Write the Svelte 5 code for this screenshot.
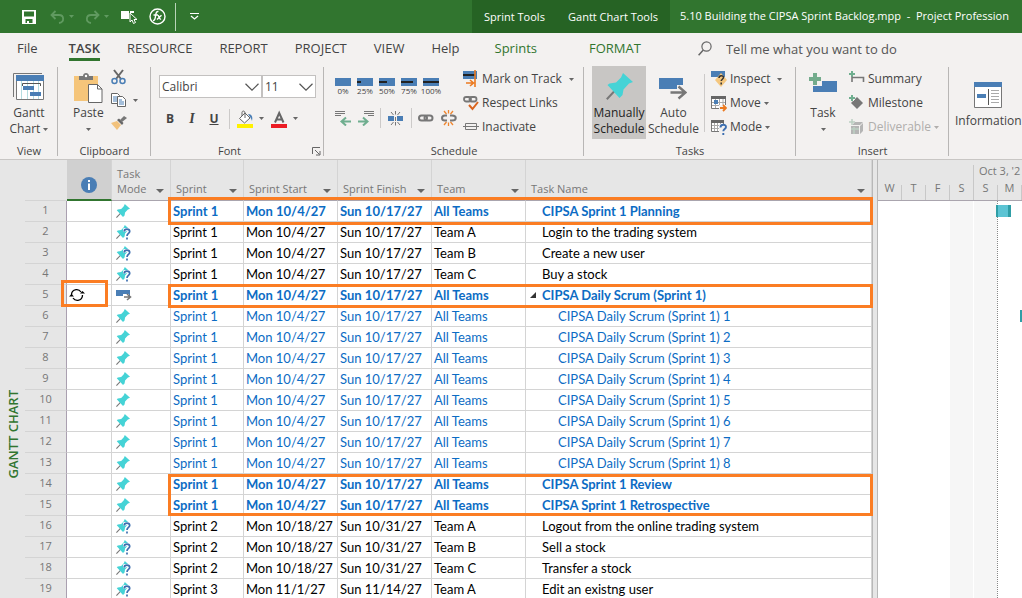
<script lang="ts">
  interface Task {
    id: number;
    mode: 'pin' | 'ask' | 'auto';
    sprint: string;
    start: string;
    finish: string;
    team: string;
    name: string;
    kind: 'bold' | 'sub' | 'plain';
  }

  const first = ['Sprint 1', 'Mon 10/4/27', 'Sun 10/17/27'];
  const second = ['Sprint 2', 'Mon 10/18/27', 'Sun 10/31/27'];
  const third = ['Sprint 3', 'Mon 11/1/27', 'Sun 11/14/27'];

  function task(id: number, mode: Task['mode'], when: string[], team: string, name: string, kind: Task['kind']): Task {
    return { id, mode, sprint: when[0], start: when[1], finish: when[2], team, name, kind };
  }

  const tasks: Task[] = [
    task(1, 'pin', first, 'All Teams', 'CIPSA Sprint 1 Planning', 'bold'),
    task(2, 'ask', first, 'Team A', 'Login to the trading system', 'plain'),
    task(3, 'ask', first, 'Team B', 'Create a new user', 'plain'),
    task(4, 'ask', first, 'Team C', 'Buy a stock', 'plain'),
    task(5, 'auto', first, 'All Teams', 'CIPSA Daily Scrum (Sprint 1)', 'bold'),
    ...[1, 2, 3, 4, 5, 6, 7, 8].map((n) =>
      task(n + 5, 'pin', first, 'All Teams', `CIPSA Daily Scrum (Sprint 1) ${n}`, 'sub')
    ),
    task(14, 'pin', first, 'All Teams', 'CIPSA Sprint 1 Review', 'bold'),
    task(15, 'pin', first, 'All Teams', 'CIPSA Sprint 1 Retrospective', 'bold'),
    task(16, 'ask', second, 'Team A', 'Logout from the online trading system', 'plain'),
    task(17, 'ask', second, 'Team B', 'Sell a stock', 'plain'),
    task(18, 'ask', second, 'Team C', 'Transfer a stock', 'plain'),
    task(19, 'ask', third, 'Team A', 'Edit an existng user', 'plain'),
  ];

  const headerHeight = 41;
  const rowHeight = 21;

  // callouts drawn over the grid; above/below is how far they reach past the rows
  const marks = [
    { area: 'fields', row: 1, rows: 1, above: 4, below: 3 },
    { area: 'fields', row: 5, rows: 1, above: 1, below: 2 },
    { area: 'info', row: 5, rows: 1, above: 5, below: 1 },
    { area: 'fields', row: 14, rows: 2, above: 0, below: 0 },
  ];

  const columns = ['Sprint', 'Sprint Start', 'Sprint Finish', 'Team', 'Task Name'];
  const tabs = ['RESOURCE', 'REPORT', 'PROJECT', 'VIEW', 'Help'];
  const percents = [0, 25, 50, 75, 100];
  const days = ['W', 'T', 'F', 'S', 'S', 'M'];
  const bars = [
    { row: 1, left: 118, width: 15 },
    { row: 6, left: 142, width: 15 },
  ];

  let font = $state('Calibri');
  let size = $state('11');
</script>

{#snippet caret()}
  <svg class="caret" width="5" height="3" viewBox="0 0 5 3"><path d="M0 0h5L2.5 3z" /></svg>
{/snippet}

{#snippet pin(px: number)}
  <svg width={px} height={px} viewBox="0 0 27 27">
    <path d="M9 17.5L.8 26.2" stroke="#777" stroke-width="2" />
    <path d="M17 0L27 9l-4 1.5-5.5 6-1 5.5-3 3L1.500 12l2-1.500L10 9.500l5-5z" fill="#45d3d6" />
  </svg>
{/snippet}

{#snippet chevron()}
  <svg class="chevron" width="14" height="8" viewBox="0 0 14 8"><path d="M.5.8L7 7.200 13.500.8" fill="none" stroke="#555" stroke-width="1.200" /></svg>
{/snippet}

<div class="window">
  <header class="titlebar">
    <div class="quick">
      <button class="save" aria-label="Save">
        <svg width="14" height="14" viewBox="0 0 14 14"><path d="M0 0h14v14H0z" fill="#fff" /><path d="M2 1.500h10v5H2zM3.500 9h7v4h-7z" fill="#31752f" /><path d="M5 11h2v3H5z" fill="#fff" /></svg>
      </button>
      <button class="undo dim" aria-label="Undo">
        <svg width="15" height="14" viewBox="0 0 15 14"><path d="M5.500 1L1.500 5l4 4M2 5h7c5 0 6 7 0 8" fill="none" stroke="#609a60" stroke-width="1.800" /></svg>
        {@render caret()}
      </button>
      <button class="redo dim" aria-label="Redo">
        <svg width="15" height="14" viewBox="0 0 15 14"><path d="M9.500 1l4 4-4 4M13 5H6C1 5 0 12 6 13" fill="none" stroke="#609a60" stroke-width="1.800" /></svg>
        {@render caret()}
      </button>
      <button class="touch" aria-label="Touch mode">
        <svg width="17" height="14" viewBox="0 0 17 14"><path d="M0 1h8v8H0zM9 1h4v2H9z" fill="#fff" /><path d="M9 3v9l2-2 1.500 3.500 2-1L13 9.500h3z" fill="#31752f" stroke="#fff" /></svg>
      </button>
      <button class="formula" aria-label="Formula">
        <svg width="17" height="17" viewBox="0 0 17 17"><circle cx="8.500" cy="8.500" r="7.500" fill="none" stroke="#fff" stroke-width="1.400" /><path d="M9.500 3.500C7.500 3 7 5 6.700 7S6 13 4 12.500M4.500 7H9M8.500 7.500c1.500-1 1.500 4.500 3.500 3.500M12.500 7.200L8 11.500" fill="none" stroke="#fff" stroke-width="1.400" /></svg>
      </button>
      <span class="bar"></span>
      <button class="more" aria-label="Customize toolbar">
        <svg width="9" height="7" viewBox="0 0 9 7"><path d="M0 .5h9M1 3l3.500 3L8 3" fill="none" stroke="#fff" stroke-width="1.200" /></svg>
      </button>
    </div>
    <div class="tools">
      <span>Sprint Tools</span>
      <span>Gantt Chart Tools</span>
    </div>
    <h1>5.10 Building the CIPSA Sprint Backlog.mpp &nbsp;-&nbsp; Project Profession</h1>
  </header>

  <nav class="tabs">
    <a class="file" href="#file">File</a>
    <a class="active" href="#task">TASK</a>
    {#each tabs as tab}
      <a href="#{tab.toLowerCase()}">{tab}</a>
    {/each}
    <div class="context">
      <a href="#sprints">Sprints</a>
      <a href="#format">FORMAT</a>
    </div>
    <label class="search">
      <svg width="14" height="15" viewBox="0 0 14 15"><circle cx="8.500" cy="5.500" r="4.600" fill="none" stroke="#666" stroke-width="1.200" /><path d="M5.300 9L.6 14.200" stroke="#666" stroke-width="1.500" /></svg>
      <input type="text" placeholder="Tell me what you want to do" aria-label="Tell me what you want to do" />
    </label>
  </nav>

  <div class="ribbon">
    <section class="group">
      <div class="body center">
        <button class="big">
          <span class="pic">
            <svg width="31" height="28" viewBox="0 0 31 28">
              <path d="M.5 24V.5H29" fill="none" stroke="#777" />
              <path d="M3 2h28v25H3z" fill="#fff" /><path d="M8.500 8v19M14.500 8v19M20.500 8v19M25.500 8v19" stroke="#b5dde0" />
              <path d="M3.500 2.500h27v24h-27z" fill="none" stroke="#777" />
              <path d="M3 2h28v6H3zM10 13h11v4H10zM17 19h11v4H17z" fill="#4a7eb5" />
              <path d="M9.500 13v-2.500h18V13" fill="none" stroke="#555" />
            </svg>
          </span>
          Gantt<br />Chart {@render caret()}
        </button>
      </div>
      <h2>View</h2>
    </section>

    <section class="group">
      <div class="body clipboard">
        <button class="big">
          <span class="pic">
            <svg width="29" height="32" viewBox="0 0 29 32">
              <path d="M0 3h24v25H0z" fill="#f5c57a" />
              <path d="M5 7V3h4c0-4 6-4 6 0h4v4z" fill="#777" /><circle cx="12" cy="3" r="1.200" fill="#fff" />
              <path d="M14.500 11.500h9l4.500 4.500v13.500H14.500z" fill="#fff" stroke="#666" /><path d="M23.500 11.500V16H28" fill="none" stroke="#666" />
            </svg>
          </span>
          Paste<br />{@render caret()}
        </button>
        <div class="stack">
          <button aria-label="Cut">
            <svg width="16" height="16" viewBox="0 0 16 16"><path d="M3 1l7 9M12 1L5 10" stroke="#666" stroke-width="2" /><circle cx="3.500" cy="12" r="2.500" fill="none" stroke="#4a7eb5" stroke-width="1.500" /><circle cx="11.500" cy="12" r="2.500" fill="none" stroke="#4a7eb5" stroke-width="1.500" /></svg>
          </button>
          <button aria-label="Copy">
            <svg width="16" height="16" viewBox="0 0 16 16"><path d="M.5 1.500h6l2 2v8h-8z" fill="#fff" stroke="#666" /><path d="M2 5h5M2 7h5M2 9h5" stroke="#4a7eb5" /><path d="M6.500 4.500h5l3 3v7h-8z" fill="#fff" stroke="#666" /><path d="M8 8h3M8 10h5M8 12h5" stroke="#4a7eb5" /></svg>
            {@render caret()}
          </button>
          <button aria-label="Format Painter">
            <svg width="16" height="16" viewBox="0 0 16 16"><path d="M0 8l6-2 4 4-4 5z" fill="#f2c27c" /><path d="M6 5l5 5 1.500-2L8 3.500z" fill="#666" /><path d="M9 5l4-4 3 2-5 4z" fill="#777" /></svg>
          </button>
        </div>
      </div>
      <h2>Clipboard</h2>
    </section>

    <section class="group font">
      <div class="body fonts">
        <div class="pickers">
          <span class="picker face">
            <select bind:value={font} aria-label="Font"><option>Calibri</option></select>
            {@render chevron()}
          </span>
          <span class="picker">
            <select bind:value={size} aria-label="Font size"><option>11</option></select>
            {@render chevron()}
          </span>
        </div>
        <div class="letters">
          <button class="letter"><b>B</b></button>
          <button class="letter"><i>I</i></button>
          <button class="letter"><u>U</u></button>
          <span class="rule"></span>
          <button class="paint" aria-label="Background color">
            <svg width="17" height="18" viewBox="0 0 17 18"><path d="M2.500 8.500L8 3l5 5-5.500 5z" fill="#fff" stroke="#666" /><path d="M5 6V2.500C5 .5 8 .5 8 3v5" fill="none" stroke="#666" /><path d="M11 4c4 0 5 3 4 7-1-3-2-4-4-7z" fill="#4a7eb5" /><path d="M0 14h16v4H0z" fill="#fff100" /></svg>
            {@render caret()}
          </button>
          <button class="paint" aria-label="Font color">
            <svg width="17" height="18" viewBox="0 0 17 18"><path d="M4 12.500L8.200 3 12.500 12.500M5.500 9.500h5.500" fill="none" stroke="#666" stroke-width="2" /><path d="M0 14h16v4H0z" fill="#ec1c24" /></svg>
            {@render caret()}
          </button>
        </div>
      </div>
      <h2>Font</h2>
      <button class="launcher" aria-label="Font settings">
        <svg width="9" height="9" viewBox="0 0 9 9"><path d="M.5 7V.5H8M3 3l4.500 4.500M8 4v4H4" fill="none" stroke="#666" /></svg>
      </button>
    </section>

    <section class="group">
      <div class="body schedule">
        <div class="progress">
          <div class="percents">
            {#each percents as p}
              <button class="percent">
                <svg width="16" height="8" viewBox="0 0 16 8"><path d="M0 0h16v8H0z" fill="#4a7eb5" /><rect x="0" y="3" width={p * 0.16} height="2" fill="#222" /></svg>
                {p}%
              </button>
            {/each}
          </div>
          <div class="links">
            <button aria-label="Outdent">
              <svg width="16" height="16" viewBox="0 0 16 16"><path d="M0 1.500h10M0 3.500h10M0 5.500h6" stroke="#777" /><path d="M16 11.500H7M11 7.500l-4.500 4 4.500 4" fill="none" stroke="#6fae8f" stroke-width="2" /></svg>
            </button>
            <button aria-label="Indent">
              <svg width="16" height="16" viewBox="0 0 16 16"><path d="M6 1.500h10M6 3.500h10M10 5.500h6" stroke="#777" /><path d="M0 11.500h9M5 7.500l4.500 4-4.500 4" fill="none" stroke="#6fae8f" stroke-width="2" /></svg>
            </button>
            <span class="rule"></span>
            <button aria-label="Split Task">
              <svg width="16" height="16" viewBox="0 0 16 16"><path d="M0 6h6v5H0zM9 6h6v5H9z" fill="#4a7eb5" /><path d="M7.500 1v3.500M7.500 12v3.500M3 2l2.500 3M12 2L9.500 5M3 15l2.500-3M12 15l-2.500-3M7.500 7v4" stroke="#777" /></svg>
            </button>
            <span class="rule"></span>
            <button aria-label="Link Tasks">
              <svg width="16" height="16" viewBox="0 0 16 16"><rect x="1" y="5.500" width="8" height="5" rx="2.500" fill="none" stroke="#777" stroke-width="2" /><rect x="6.500" y="5.500" width="8" height="5" rx="2.500" fill="none" stroke="#777" stroke-width="2" /></svg>
            </button>
            <button aria-label="Unlink Tasks">
              <svg width="16" height="16" viewBox="0 0 16 16"><path d="M6 5.500H4c-4 0-4 5 0 5h2M9 5.500h2c5 0 5 5 0 5H9" fill="none" stroke="#777" stroke-width="2" /><path d="M7.500 0v3.500M7.500 12.500V16M3 1l2.500 3M12 1L9.500 4M3 15l2.500-3M12 15l-2.500-3" stroke="#f0862e" stroke-width="1.300" /></svg>
            </button>
          </div>
        </div>
        <div class="rows">
          <button>
            <svg width="16" height="18" viewBox="0 0 16 18"><path d="M0 1h14v8H0z" fill="#4a7eb5" /><path d="M0 4h12v2H0z" fill="#222" /><path d="M12 0v17M3 13h7M7 10l3.500 3L7 16" fill="none" stroke="#ec7a20" stroke-width="1.600" /></svg>
            Mark on Track <span class="gap">{@render caret()}</span>
          </button>
          <button>
            <svg width="16" height="18" viewBox="0 0 16 18"><rect x="1" y="3" width="7" height="4.500" rx="2.200" fill="none" stroke="#777" stroke-width="1.800" /><rect x="6.500" y="3" width="7" height="4.500" rx="2.200" fill="none" stroke="#777" stroke-width="1.800" /><path d="M6 11l3.500 4L15 8" fill="none" stroke="#d9641e" stroke-width="2" /></svg>
            Respect Links
          </button>
          <button>
            <svg width="16" height="18" viewBox="0 0 16 18"><path d="M2.500 5.500h11v6h-11zM0 8.500h16" fill="none" stroke="#777" /></svg>
            Inactivate
          </button>
        </div>
      </div>
      <h2>Schedule</h2>
    </section>

    <section class="group">
      <div class="body modes">
        <button class="big selected"><span class="pic">{@render pin(27)}</span>Manually<br />Schedule</button>
        <button class="big">
          <span class="pic">
            <svg width="28" height="27" viewBox="0 0 28 27"><path d="M0 5h24v11H0z" fill="#4a7eb5" /><path d="M10 16h8v-4h6l5 5v5H10z" fill="#f3f1f0" /><path d="M11.500 19.500H26M19.500 13.500l7 6-7 6" fill="none" stroke="#777" stroke-width="2.400" /></svg>
          </span>
          Auto<br />Schedule
        </button>
        <span class="rule tall"></span>
        <div class="rows">
          <button>
            <svg width="16" height="18" viewBox="0 0 16 18"><path d="M0 1h14v6H0z" fill="#4a7eb5" /><path d="M10 3l6 7-6 7-6-7z" fill="#f5c77e" /><path d="M8 8c0-3 4.500-3 4.500-.5C12.500 9 10.200 9.500 10.200 11M10.200 12.500v2" fill="none" stroke="#333" stroke-width="1.500" /></svg>
            Inspect <span class="gap">{@render caret()}</span>
          </button>
          <button>
            <svg width="16" height="18" viewBox="0 0 16 18"><path d="M.5 2.500h14v12H.5z" fill="#fff" stroke="#777" /><path d="M0 2h15v3H0z" fill="#666" /><path d="M4.500 5v9M8.500 5v9M12 5v9M1 8.500h13M1 11.500h13" stroke="#aaa" /><path d="M3 6h4v4H3z" fill="#4a7eb5" /><path d="M8 11h8v6H8z" fill="#f3f1f0" /><path d="M9 14h6M12 11l3 3-3 3" fill="none" stroke="#ec7a20" stroke-width="1.800" /></svg>
            Move {@render caret()}
          </button>
          <button>
            <svg width="16" height="18" viewBox="0 0 16 18"><path d="M.5 2.500h12v11H.5z" fill="#fff" stroke="#777" /><path d="M0 2h13v3H0z" fill="#666" /><path d="M3.500 5v8M6.500 5v8M9.500 5v8M1 7.500h11M1 10.500h11" stroke="#aaa" /><path d="M8 6h8v12H8z" fill="#f3f1f0" /><path d="M9.500 9.500c0-3.500 5.500-3.500 5.500-.5 0 2-2.700 2.200-2.700 4.300M12.300 15v2" fill="none" stroke="#3d6fb0" stroke-width="1.900" /></svg>
            Mode {@render caret()}
          </button>
        </div>
      </div>
      <h2>Tasks</h2>
    </section>

    <section class="group">
      <div class="body insert">
        <button class="big">
          <span class="pic">
            <svg width="28" height="22" viewBox="0 0 28 22"><path d="M4 8h24v11H4z" fill="#4a7eb5" /><path d="M3 6h10v7H3z" fill="#f3f1f0" /><path d="M4 0h4v4h4v4H8v4H4V8H0V4h4z" fill="#73ab8c" /></svg>
          </span>
          Task<br />{@render caret()}
        </button>
        <div class="rows">
          <button>
            <svg width="16" height="18" viewBox="0 0 16 18"><path d="M3 1v6M0 4h6" stroke="#6fae8f" stroke-width="2" /><path d="M3 12V7.500h11.500V12" fill="none" stroke="#777" stroke-width="1.600" /></svg>
            Summary
          </button>
          <button>
            <svg width="16" height="18" viewBox="0 0 16 18"><path d="M8 3l6 6-6 6-6-6z" fill="#777" /><path d="M3 1v6M0 4h6" stroke="#f3f1f0" stroke-width="4" /><path d="M3 1v6M0 4h6" stroke="#6fae8f" stroke-width="2" /></svg>
            Milestone
          </button>
          <button class="off" disabled>
            <svg width="16" height="18" viewBox="0 0 16 18"><path d="M2 8h8v8H2zM11 8l3-3v8l-3 3zM3 7l3-3h8l-3 3z" fill="#b5b5b5" /><path d="M3 1v6M0 4h6M5 9v7M2 11h8" stroke="#bccfc2" stroke-width="1.500" /></svg>
            Deliverable {@render caret()}
          </button>
        </div>
      </div>
      <h2>Insert</h2>
    </section>

    <section class="group last">
      <div class="body">
        <button class="big">
          <span class="pic">
            <svg width="28" height="27" viewBox="0 0 28 27"><path d="M.5 1.500h27v25H.5z" fill="#fff" stroke="#777" /><path d="M0 1h28v5H0zM3 13h9v4H3z" fill="#4a7eb5" /><path d="M14.500 8v16" stroke="#555" /><path d="M17 9.500h8M17 12.500h8M17 15.500h8M17 18.500h8M17 21.500h8" stroke="#aaa" /></svg>
          </span>
          Information
        </button>
      </div>
    </section>
  </div>

  <main class="workspace">
    <aside class="rail"><span>GANTT CHART</span></aside>

    <div class="sheet">
      <table>
        <colgroup>
          <col class="c-id" /><col class="c-info" /><col class="c-mode" /><col class="c-sprint" />
          <col class="c-field" /><col class="c-field" /><col class="c-field" /><col />
        </colgroup>
        <thead>
          <tr>
            <th class="corner" aria-label="Row"></th>
            <th class="info" aria-label="Indicators">
              <svg width="16" height="16" viewBox="0 0 16 16"><circle cx="8" cy="8" r="8" fill="#4a7eb5" /><path d="M7 6.500h2V13H7zM7 3h2v2H7z" fill="#fff" /></svg>
            </th>
            <th><div class="head"><span>Task<br />Mode</span><button aria-label="Filter Task Mode"></button></div></th>
            {#each columns as column}
              <th><div class="head"><span>{column}</span><button aria-label="Filter {column}"></button></div></th>
            {/each}
          </tr>
        </thead>
        <tbody>
          {#each tasks as t (t.id)}
            <tr class={t.kind}>
              <th scope="row">{t.id}</th>
              <td class="indicator">
                {#if t.id === 5}
                  <svg width="16" height="14" viewBox="0 0 16 14"><path d="M2.500 7A5.300 5.300 0 0 1 7 1.700c2-.3 3.800.5 5 2.300M13.500 7A5.300 5.300 0 0 1 9 12.300c-2 .3-3.800-.5-5-2.300" fill="none" stroke="#000" stroke-width="1.300" /><path d="M11 5.500h5L13.500 3zM0 8.500h5L2.500 6z" /></svg>
                {/if}
              </td>
              <td class="mode">
                {#if t.mode === 'auto'}
                  <svg width="16" height="14" viewBox="0 0 16 14"><path d="M0 2h14v6H0z" fill="#4a7eb5" /><path d="M7 6h6v6H7z" fill="#fff" /><path d="M8 9h6M11 6l3.500 3-3.500 3" fill="none" stroke="#777" stroke-width="1.600" /></svg>
                {:else}
                  {@render pin(14)}
                {/if}
                {#if t.mode === 'ask'}
                  <svg class="ask" width="8" height="12" viewBox="0 0 8 12"><path d="M1.200 3.500c0-3.300 5.500-3.300 5.500 0C6.700 5.500 4 5.500 4 8M4 9.500v2" fill="none" stroke="#fff" stroke-width="4" /><path d="M1.200 3.500c0-3.300 5.500-3.300 5.500 0C6.700 5.500 4 5.500 4 8M4 9.500v2" fill="none" stroke="#3d6fb0" stroke-width="1.700" /></svg>
                {/if}
              </td>
              <td>{t.sprint}</td>
              <td>{t.start}</td>
              <td>{t.finish}</td>
              <td>{t.team}</td>
              <td class="name">
                {#if t.id === 5}
                  <svg class="fold" width="6" height="6" viewBox="0 0 6 6"><path d="M6 0v6H0z" fill="#333" /></svg>
                {/if}
                {t.name}
              </td>
            </tr>
          {/each}
        </tbody>
      </table>
      {#each marks as m}
        <div
          class="mark {m.area}"
          style="top: {headerHeight + (m.row - 1) * rowHeight - m.above}px; height: {m.rows * rowHeight + m.above + m.below}px"
        ></div>
      {/each}
    </div>

    <div class="splitter"></div>

    <div class="chart">
      <div class="scale">
        <span class="week">Oct 3, '2</span>
        {#each days as day}
          <span class="day">{day}</span>
        {/each}
      </div>
      <div class="plot">
        {#each days as day}
          <div class:weekend={day === 'S'} class:today={day === 'M'}></div>
        {/each}
        {#each bars as bar}
          <span class="task-bar" style="left: {bar.left}px; top: {(bar.row - 1) * rowHeight + 4}px; width: {bar.width}px"></span>
        {/each}
      </div>
    </div>
  </main>
</div>

<style>
  :global(body) {
    margin: 0;
    overflow: hidden;
  }

  .window {
    display: flex;
    flex-direction: column;
    height: 100vh;
    overflow: hidden;
    background: #f3f1f0;
    color: #444;
    font-family: 'Open Sans', 'Noto Sans', sans-serif;
    font-size: 12px;
    line-height: 16px;
  }

  button {
    display: flex;
    align-items: center;
    padding: 0;
    border: 0;
    background: none;
    color: inherit;
    font: inherit;
    white-space: nowrap;
  }

  svg {
    flex: none;
  }

  .caret {
    fill: #666;
    vertical-align: 2px;
  }

  .titlebar {
    display: flex;
    height: 33px;
    background: #31752f;
    color: #fff;
    white-space: nowrap;
  }

  .quick {
    display: flex;
    align-items: center;
    width: 450px;
    padding-left: 22px;
  }

  .quick button {
    gap: 4px;
  }

  .save {
    margin-right: 14px;
  }

  .undo {
    margin-right: 11px;
  }

  .redo {
    margin-right: 12px;
  }

  .touch {
    margin-right: 11px;
  }

  .dim .caret {
    fill: #609a60;
  }

  .bar {
    width: 1px;
    height: 28px;
    margin: 0 14px 0 9px;
    background: #b9d3b8;
  }

  .tools {
    display: flex;
    align-items: center;
    justify-content: space-between;
    width: 174px;
    padding: 0 12px;
    background: #266324;
    font-size: 11px;
  }

  h1 {
    margin: 0;
    padding-left: 10px;
    font-size: 11px;
    font-weight: 400;
    line-height: 31px;
  }

  .tools span {
    line-height: 31px;
  }

  .tabs {
    display: flex;
    height: 31px;
    padding-left: 17px;
    gap: 27px;
    font-size: 13px;
    line-height: 30px;
    white-space: nowrap;
  }

  .tabs a {
    color: #444;
    text-decoration: none;
  }

  .tabs .file {
    margin-right: 4px;
  }

  .tabs .active {
    height: 25px;
    border-bottom: 3px solid #31752f;
    font-weight: 600;
  }

  .context {
    display: flex;
    padding-left: 8px;
    gap: 52px;
  }

  .tabs .context a {
    color: #31752f;
  }

  .search {
    display: flex;
    align-items: center;
    flex: 1;
    margin-left: 30px;
    gap: 14px;
  }

  .search input {
    flex: 1;
    min-width: 0;
    padding: 0;
    border: 0;
    background: none;
    font: inherit;
  }

  .search input::placeholder {
    color: #555;
    opacity: 1;
  }

  .ribbon {
    display: grid;
    grid-template-columns: 58px 93px 173px 260px 212px 153px 1fr;
    height: 95px;
    border-bottom: 1px solid #c8c6c4;
  }

  .group {
    position: relative;
    display: flex;
    flex-direction: column;
    min-width: 0;
  }

  .group:not(.last)::after {
    content: '';
    position: absolute;
    top: 3px;
    right: 0;
    bottom: 3px;
    border-right: 1px solid #b8b6b5;
  }

  .body {
    display: flex;
    flex: 1;
    min-height: 0;
  }

  .center {
    justify-content: center;
  }

  h2 {
    margin: 0;
    font-size: 11px;
    font-weight: 400;
    line-height: 16px;
    text-align: center;
  }

  .font h2 {
    padding-right: 16px;
  }

  .big {
    display: block;
    height: 73px;
    margin-top: 2px;
    text-align: center;
  }

  .pic {
    display: flex;
    justify-content: center;
    height: 32px;
    padding-top: 5px;
  }

  .selected {
    width: 54px;
    background: #c8c6c4;
    color: #222;
  }

  .clipboard {
    padding-left: 15px;
    gap: 7px;
  }

  .stack {
    display: flex;
    flex-direction: column;
    padding-top: 5px;
    gap: 7px;
  }

  .stack button {
    gap: 6px;
  }

  .fonts {
    flex-direction: column;
    padding: 11px 0 0 8px;
  }

  .pickers {
    display: flex;
  }

  .picker {
    position: relative;
    width: 54px;
  }

  .face {
    width: 103px;
  }

  .picker select {
    appearance: none;
    width: 100%;
    height: 23px;
    padding: 0 2px;
    border: 1px solid #c3c1c0;
    border-radius: 0;
    background: #fff;
    color: #444;
    font: inherit;
  }

  .chevron {
    position: absolute;
    top: 8px;
    right: 3px;
    pointer-events: none;
  }

  .letters {
    display: flex;
    align-items: center;
    height: 41px;
  }

  .letter {
    justify-content: center;
    width: 22px;
  }

  .letter i {
    font-family: 'Liberation Serif', serif;
    font-size: 14px;
    font-weight: 700;
  }

  .letter u {
    font-weight: 700;
  }

  .rule {
    width: 1px;
    height: 20px;
    background: #cccac9;
  }

  .letters .rule {
    margin: 0 7px 0 4px;
  }

  .paint {
    width: 34px;
    gap: 5px;
  }

  .launcher {
    position: absolute;
    right: 3px;
    bottom: 3px;
  }

  .schedule {
    padding-left: 11px;
    gap: 6px;
  }

  .progress {
    width: 122px;
    padding-top: 14px;
  }

  .percents {
    display: flex;
    height: 30px;
    gap: 6px;
  }

  .percent {
    flex-direction: column;
    width: 16px;
    font-size: 8px;
    line-height: 9px;
  }

  .links {
    display: flex;
    align-items: center;
    justify-content: space-between;
  }

  .rows {
    display: flex;
    flex-direction: column;
    padding-top: 3px;
  }

  .rows button {
    height: 24px;
    gap: 3px;
  }

  .gap {
    padding-left: 4px;
  }

  .rows .off {
    color: #b0aeac;
  }

  .off .caret {
    fill: #b0aeac;
  }

  .modes {
    padding-left: 8px;
    gap: 2px;
  }

  .tall {
    height: 58px;
    margin: 10px 4px 0 3px;
  }

  .insert {
    padding-left: 13px;
    gap: 12px;
  }

  .last .body {
    padding-left: 6px;
  }

  .workspace {
    display: grid;
    grid-template-columns: 25px 1fr 6px 144px;
    flex: 1;
    min-height: 0;
    background: #fff;
  }

  .rail {
    display: flex;
    align-items: flex-end;
    justify-content: center;
    padding-bottom: 121px;
    background: #e6e6e6;
  }

  .rail span {
    color: #31752f;
    font-size: 13px;
    font-weight: 600;
    white-space: nowrap;
    writing-mode: vertical-rl;
    transform: rotate(180deg);
  }

  .sheet {
    position: relative;
    min-width: 0;
  }

  table {
    width: 100%;
    table-layout: fixed;
    border-spacing: 0;
  }

  .c-id {
    width: 42px;
  }

  .c-info {
    width: 45px;
  }

  .c-mode {
    width: 59px;
  }

  .c-sprint {
    width: 73px;
  }

  .c-field {
    width: 94px;
  }

  th,
  td {
    box-sizing: border-box;
    padding: 0;
    border-right: 1px solid #d4d4d4;
    border-bottom: 1px solid #d4d4d4;
  }

  th {
    background: #e6e6e6;
    color: #777;
    font-size: 11px;
    font-weight: 400;
  }

  thead th {
    height: 41px;
    border-bottom-color: #aaa5ae;
    vertical-align: bottom;
  }

  thead .corner {
    border-right-color: #e6e6e6;
    border-bottom-color: #d4d4d4;
  }

  thead .info {
    border-bottom: 2px solid #31752f;
    background: #d0d0d0;
    padding-top: 14px;
    vertical-align: middle;
  }

  .head {
    display: flex;
    align-items: flex-end;
    justify-content: space-between;
    padding: 0 6px 4px 5px;
    line-height: 15px;
    text-align: left;
    white-space: nowrap;
  }

  .head button {
    margin-bottom: 3px;
    border-top: 4px solid #666;
    border-right: 4px solid transparent;
    border-left: 4px solid transparent;
  }

  tbody th {
    border-right-color: #aaa0b0;
    line-height: 18px;
    vertical-align: top;
  }

  td {
    height: 21px;
    padding-left: 2px;
    font-family: Lato, sans-serif;
    font-size: 13px;
    line-height: 20px;
    white-space: nowrap;
    color: #000;
  }

  .bold td {
    color: #0c6cc4;
    font-weight: 700;
  }

  .sub td {
    color: #0c6cc4;
  }

  .indicator svg,
  .mode svg {
    display: block;
  }

  .mode {
    position: relative;
    padding-left: 4px;
  }

  .mode .ask {
    position: absolute;
    top: 6px;
    left: 11px;
  }

  .name {
    position: relative;
    padding-left: 16px;
  }

  .sub .name {
    padding-left: 32px;
  }

  .fold {
    position: absolute;
    top: 7px;
    left: 4px;
  }

  .mark {
    position: absolute;
    box-sizing: border-box;
    border: 3px solid #fb7d23;
    pointer-events: none;
  }

  .fields {
    left: 143px;
    right: -1px;
  }

  .info.mark {
    left: 36px;
    width: 47px;
  }

  .splitter {
    box-sizing: border-box;
    border-right: 1px solid #b8b8b8;
    border-left: 1px solid #b8b8b8;
    background: #e6e6e6;
  }

  .chart {
    display: flex;
    flex-direction: column;
    min-width: 0;
  }

  .scale,
  .plot {
    display: grid;
    grid-template-columns: repeat(6, 24px);
  }

  .scale {
    grid-template-rows: 20px 15px;
    height: 35px;
    padding-top: 5px;
    border-bottom: 1px solid #aaa5ae;
    background: #e6e6e6;
    color: #777;
    font-size: 11px;
  }

  .week {
    grid-column: 5 / 7;
    margin-left: -1px;
    padding-left: 5px;
    border-left: 1px solid #c8c8c8;
    line-height: 11px;
    white-space: nowrap;
  }

  .day {
    grid-row: 2;
    border-right: 1px solid #c8c8c8;
    line-height: 6px;
    text-align: center;
  }

  .plot {
    position: relative;
    flex: 1;
    overflow: hidden;
  }

  .weekend {
    margin-right: 1px;
    background: #f6f6f6;
  }

  .today {
    margin-left: -1px;
    border-left: 1px dotted #888;
  }

  .task-bar {
    position: absolute;
    box-sizing: border-box;
    height: 12px;
    border: solid #2f9ea6;
    border-width: 0 3px 0 2px;
    background: #5cc4d4;
  }
</style>
